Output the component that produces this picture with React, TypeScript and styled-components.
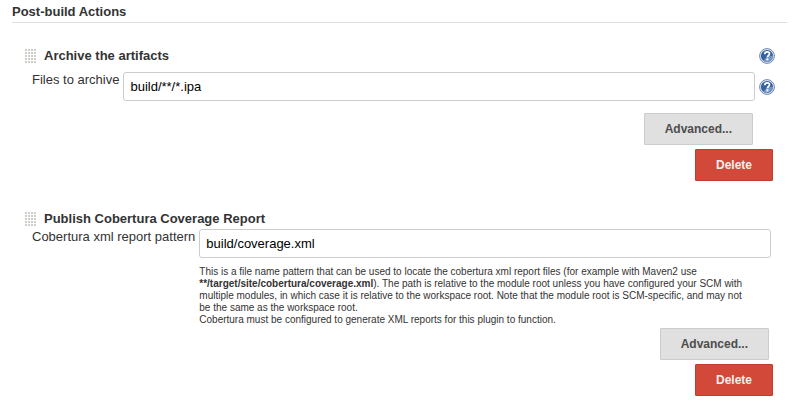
import React from "react";
import styled, { createGlobalStyle } from "styled-components";

const GlobalStyle = createGlobalStyle`
  *, *::before, *::after { box-sizing: border-box; }
  body {
    margin: 0;
    background: #fff;
    color: #333;
    font: 13px/16px "Liberation Sans", Arial, Helvetica, sans-serif;
  }
`;

const Page = styled.main`
  padding: 4px 13px 0 12px;
`;

const SectionHeading = styled.h1`
  margin: 0;
  padding-bottom: 2px;
  border-bottom: 1px solid #dedede;
  font-size: 13px;
  line-height: 16px;
`;

const StepList = styled.div`
  display: flex;
  flex-direction: column;
  gap: 29px;
  padding: 24px 12px 0 13px;
`;

const Step = styled.section`
  display: flex;
  flex-direction: column;
`;

const StepHeader = styled.header`
  display: flex;
  align-items: center;
  gap: 8px;
  height: 18px;
`;

const StepTitle = styled.h2`
  flex: 1;
  margin: 0;
  font-size: 13px;
  line-height: 16px;
`;

const FieldRow = styled.div<{ $spaced?: boolean }>`
  display: flex;
  align-items: flex-start;
  gap: 4px;
  padding-left: 7px;
  margin-right: ${(p) => (p.$spaced ? "0" : "4px")};
  margin-top: ${(p) => (p.$spaced ? "7px" : "1px")};
`;

const FieldLabel = styled.label`
  flex: none;
  line-height: 16px;
`;

const FieldBody = styled.div`
  flex: 1;
  min-width: 0;
`;

const TextInput = styled.input`
  display: block;
  width: 100%;
  height: 29px;
  padding: 0 6px;
  border: 1px solid #ccc;
  border-radius: 3px;
  background: #fff;
  color: #000;
  font: inherit;
`;

const Description = styled.p`
  margin: 8px 0 0;
  padding-right: 20px;
  font-size: 10px;
  line-height: 12px;
`;

const HelpButton = styled.button`
  display: block;
  flex: none;
  align-self: center;
  padding: 0;
  border: 0;
  background: none;
  cursor: pointer;

  svg { display: block; }
`;

const Actions = styled.div<{ $inset: number; $top: number }>`
  display: flex;
  flex-direction: column;
  align-items: flex-end;
  gap: 4px;
  margin: ${(p) => p.$top}px 2px 0 0;

  & > :first-child { margin-right: ${(p) => p.$inset}px; }
`;

const Button = styled.button<{ $danger?: boolean }>`
  height: 32px;
  padding: 0 20px;
  border: 1px solid ${(p) => (p.$danger ? "#c43c2d" : "#ccc")};
  border-radius: 1px;
  background: ${(p) => (p.$danger ? "#d24939" : "#e0e0e0")};
  color: ${(p) => (p.$danger ? "#f5eeee" : "#4d4d4d")};
  font: bold 12px/16px "Liberation Sans", Arial, Helvetica, sans-serif;
  cursor: pointer;
`;

function DragHandle() {
  return (
    <svg width="11" height="14" viewBox="0 0 11 14" aria-hidden="true">
      {[0, 1, 2, 3, 4].map((row) =>
        [0, 1, 2, 3].map((col) => (
          <rect key={`${row}-${col}`} x={col * 3} y={row * 3} width="2" height="2" fill="#d0cec9" />
        ))
      )}
    </svg>
  );
}

function Help({ topic }: { topic: string }) {
  return (
    <HelpButton type="button" aria-label={`Help for ${topic}`}>
      <svg width="16" height="16" viewBox="0 0 16 16">
        <circle cx="8" cy="8" r="7.4" fill="#dfe8f3" stroke="#7089b0" />
        <circle cx="8" cy="8" r="6.1" fill="#3560a2" />
        <path d="M8 8.5 14.1 7.5A6.1 6.1 0 0 1 4.2 12.7Z" fill="#7595c2" />
        <path
          d="M5.7 6.2C5.8 4.6 6.7 3.8 8.1 3.8c1.5 0 2.4.8 2.4 2 0 1.7-2.1 1.7-2.1 3.4"
          fill="none"
          stroke="#fff"
          strokeWidth="1.7"
        />
        <rect x="7.4" y="10.4" width="2" height="2" fill="#fff" />
      </svg>
    </HelpButton>
  );
}

export default function App() {
  return (
    <>
      <GlobalStyle />
      <Page>
        <SectionHeading>Post-build Actions</SectionHeading>
        <StepList>
          <Step>
            <StepHeader>
              <DragHandle />
              <StepTitle>Archive the artifacts</StepTitle>
              <Help topic="Archive the artifacts" />
            </StepHeader>
            <FieldRow $spaced>
              <FieldLabel htmlFor="files">Files to archive</FieldLabel>
              <FieldBody>
                <TextInput id="files" defaultValue="build/**/*.ipa" />
              </FieldBody>
              <Help topic="Files to archive" />
            </FieldRow>
            <Actions $inset={20} $top={12}>
              <Button type="button">Advanced...</Button>
              <Button type="button" $danger>Delete</Button>
            </Actions>
          </Step>
          <Step>
            <StepHeader>
              <DragHandle />
              <StepTitle>Publish Cobertura Coverage Report</StepTitle>
            </StepHeader>
            <FieldRow>
              <FieldLabel htmlFor="pattern">Cobertura xml report pattern</FieldLabel>
              <FieldBody>
                <TextInput id="pattern" defaultValue="build/coverage.xml" />
                <Description>
                  This is a file name pattern that can be used to locate the cobertura xml report files (for example with
                  Maven2 use <b>**/target/site/cobertura/coverage.xml</b>). The path is relative to the module root unless
                  you have configured your SCM with multiple modules, in which case it is relative to the workspace root.
                  Note that the module root is SCM-specific, and may not be the same as the workspace root.
                  <br />
                  Cobertura must be configured to generate XML reports for this plugin to function.
                </Description>
              </FieldBody>
            </FieldRow>
            <Actions $inset={4} $top={2}>
              <Button type="button">Advanced...</Button>
              <Button type="button" $danger>Delete</Button>
            </Actions>
          </Step>
        </StepList>
      </Page>
    </>
  );
}
